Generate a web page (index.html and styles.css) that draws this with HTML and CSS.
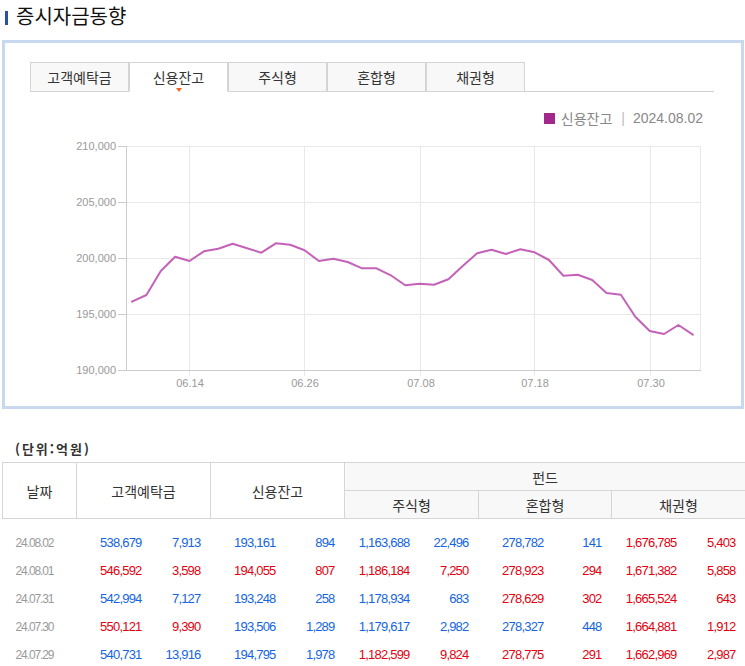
FILE: index.html
```html
<!DOCTYPE html>
<html lang="ko">
<head>
<meta charset="utf-8">
<title>증시자금동향</title>
<link rel="stylesheet" href="styles.css">
</head>
<body>
<h1 class="title"><span class="title-bar"></span>증시자금동향</h1>

<section class="panel">
  <ul class="tabs">
    <li class="tab">고객예탁금</li>
    <li class="tab active">신용잔고</li>
    <li class="tab">주식형</li>
    <li class="tab">혼합형</li>
    <li class="tab">채권형</li>
  </ul>
  <div class="legend">
    <span class="swatch"></span>
    <span class="legend-name">신용잔고</span>
    <span class="legend-sep">|</span>
    <span class="legend-date">2024.08.02</span>
  </div>
  <svg class="chart" width="736" height="278" viewBox="5 128 736 278" xmlns="http://www.w3.org/2000/svg">
    <g class="grid">
      <line x1="126" y1="146.5" x2="700" y2="146.5"/>
      <line x1="126" y1="202.5" x2="700" y2="202.5"/>
      <line x1="126" y1="258.5" x2="700" y2="258.5"/>
      <line x1="126" y1="314.5" x2="700" y2="314.5"/>
      <line x1="189.5" y1="146" x2="189.5" y2="376"/>
      <line x1="304.5" y1="146" x2="304.5" y2="376"/>
      <line x1="420.5" y1="146" x2="420.5" y2="376"/>
      <line x1="534.5" y1="146" x2="534.5" y2="376"/>
      <line x1="650.5" y1="146" x2="650.5" y2="376"/>
      <line x1="700.5" y1="146" x2="700.5" y2="370"/>
    </g>
    <g class="axis">
      <line x1="126.5" y1="146" x2="126.5" y2="371"/>
      <line x1="126" y1="370.5" x2="701" y2="370.5"/>
      <line x1="118" y1="146.5" x2="126" y2="146.5"/>
      <line x1="118" y1="202.5" x2="126" y2="202.5"/>
      <line x1="118" y1="258.5" x2="126" y2="258.5"/>
      <line x1="118" y1="314.5" x2="126" y2="314.5"/>
      <line x1="118" y1="370.5" x2="126" y2="370.5"/>
    </g>
    <g class="ylabels">
      <text x="116" y="150">210,000</text>
      <text x="116" y="206">205,000</text>
      <text x="116" y="262">200,000</text>
      <text x="116" y="318">195,000</text>
      <text x="116" y="374">190,000</text>
    </g>
    <g class="xlabels">
      <text x="190" y="387">06.14</text>
      <text x="305" y="387">06.26</text>
      <text x="421" y="387">07.08</text>
      <text x="535" y="387">07.18</text>
      <text x="651" y="387">07.30</text>
    </g>
    <polyline class="series" points="132,301.7 146.4,295 160.8,271 175.1,256.7 189.5,261 203.9,251.3 218.3,248.7 232.7,243.7 247,248.3 261.4,252.7 275.8,243.3 290.2,244.7 304.6,250.3 318.9,261 333.3,258.7 347.7,262 362.1,268.3 376.5,268.3 390.8,275.3 405.2,285.3 419.6,283.7 434,284.7 448.4,279.3 462.7,266 477.1,253.3 491.5,249.7 505.9,254 520.3,249.3 534.6,252.3 549,260 563.4,275.7 577.8,274.7 592.2,280 606.5,293 620.9,294.7 635.3,316.7 649.7,331 664.1,334 678.4,325 692.8,334.6"/>
  </svg>
</section>

<p class="unit">(단위:억원)</p>

<table class="data">
  <colgroup>
    <col class="c-date">
    <col class="c-a"><col class="c-a">
    <col class="c-a"><col class="c-a">
    <col class="c-a"><col class="c-a">
    <col class="c-a"><col class="c-b">
    <col class="c-a"><col class="c-a">
  </colgroup>
  <thead>
    <tr>
      <th rowspan="2">날짜</th>
      <th colspan="2" rowspan="2">고객예탁금</th>
      <th colspan="2" rowspan="2">신용잔고</th>
      <th colspan="6" class="fund">펀드</th>
    </tr>
    <tr>
      <th colspan="2" class="fund">주식형</th>
      <th colspan="2" class="fund">혼합형</th>
      <th colspan="2" class="fund">채권형</th>
    </tr>
  </thead>
  <tbody>
    <tr>
      <td class="date">24.08.02</td>
      <td class="dn">538,679</td><td class="dn ch">7,913</td>
      <td class="dn">193,161</td><td class="dn ch">894</td>
      <td class="dn">1,163,688</td><td class="dn ch">22,496</td>
      <td class="dn">278,782</td><td class="dn ch">141</td>
      <td class="up">1,676,785</td><td class="up ch">5,403</td>
    </tr>
    <tr>
      <td class="date">24.08.01</td>
      <td class="up">546,592</td><td class="up ch">3,598</td>
      <td class="up">194,055</td><td class="up ch">807</td>
      <td class="up">1,186,184</td><td class="up ch">7,250</td>
      <td class="up">278,923</td><td class="up ch">294</td>
      <td class="up">1,671,382</td><td class="up ch">5,858</td>
    </tr>
    <tr>
      <td class="date">24.07.31</td>
      <td class="dn">542,994</td><td class="dn ch">7,127</td>
      <td class="dn">193,248</td><td class="dn ch">258</td>
      <td class="dn">1,178,934</td><td class="dn ch">683</td>
      <td class="up">278,629</td><td class="up ch">302</td>
      <td class="up">1,665,524</td><td class="up ch">643</td>
    </tr>
    <tr>
      <td class="date">24.07.30</td>
      <td class="up">550,121</td><td class="up ch">9,390</td>
      <td class="dn">193,506</td><td class="dn ch">1,289</td>
      <td class="dn">1,179,617</td><td class="dn ch">2,982</td>
      <td class="dn">278,327</td><td class="dn ch">448</td>
      <td class="up">1,664,881</td><td class="up ch">1,912</td>
    </tr>
    <tr>
      <td class="date">24.07.29</td>
      <td class="dn">540,731</td><td class="dn ch">13,916</td>
      <td class="dn">194,795</td><td class="dn ch">1,978</td>
      <td class="up">1,182,599</td><td class="up ch">9,824</td>
      <td class="up">278,775</td><td class="up ch">291</td>
      <td class="up">1,662,969</td><td class="up ch">2,987</td>
    </tr>
  </tbody>
</table>
</body>
</html>
```

FILE: styles.css
```css
* {
  box-sizing: border-box;
}

html, body {
  margin: 0;
  padding: 0;
  background: #fff;
}

body {
  font-family: "Liberation Sans", "Noto Sans CJK KR", sans-serif;
  color: #333;
  width: 745px;
  overflow: hidden;
}

.title {
  display: flex;
  align-items: flex-start;
  margin: 0;
  padding: 4px 0 0 5px;
  height: 28px;
  font-family: "Noto Sans CJK KR", sans-serif;
  font-size: 20px;
  line-height: 24px;
  font-weight: normal;
  color: #111;
}

.title-bar {
  display: block;
  width: 3px;
  height: 14px;
  margin: 7px 8px 0 0;
  background: #2d4f9e;
}

.panel {
  margin: 12px 0 0 2px;
  width: 742px;
  height: 369px;
  border: 3px solid #c8d8ee;
  background: #fff;
}

.tabs {
  display: flex;
  list-style: none;
  margin: 19px 27px 0 25px;
  padding: 0;
  height: 30px;
  border-bottom: 1px solid #cfcfcf;
}

.tab {
  position: relative;
  width: 99px;
  height: 30px;
  margin-bottom: -1px;
  border: 1px solid #d4d4d4;
  background: #f8f8f8;
  text-align: center;
  font-family: "Noto Sans CJK KR", sans-serif;
  font-size: 14px;
  line-height: 28px;
  color: #333;
}

.tab.active {
  background: #fff;
  border-bottom-color: #fff;
}

.tab.active::after {
  content: "";
  position: absolute;
  left: 46px;
  top: 25px;
  width: 0;
  height: 0;
  border-style: solid;
  border-width: 4px 3.5px 0 3.5px;
  border-color: #f26522 transparent transparent transparent;
}

.legend {
  display: flex;
  justify-content: flex-end;
  align-items: center;
  height: 20px;
  margin: 16px 38px 0 0;
  font-size: 14px;
  color: #888;
}

.swatch {
  width: 11px;
  height: 11px;
  margin-right: 6px;
  background: #a2288c;
}

.legend-name {
  font-family: "Noto Sans CJK KR", sans-serif;
  line-height: 20px;
}

.legend-sep {
  margin: 0 8px 0 9px;
  color: #bbb;
}

.legend-date {
  line-height: 20px;
}

.chart {
  display: block;
}

.grid line {
  stroke: #e8e8e8;
  stroke-width: 1;
}

.axis line {
  stroke: #cccccc;
  stroke-width: 1;
}

.ylabels text {
  font-family: "Liberation Sans", sans-serif;
  font-size: 11px;
  fill: #999;
  text-anchor: end;
}

.xlabels text {
  font-family: "Liberation Sans", sans-serif;
  font-size: 11px;
  fill: #999;
  text-anchor: middle;
}

.series {
  fill: none;
  stroke: #c462b8;
  stroke-width: 2;
  stroke-linejoin: round;
  stroke-linecap: round;
}

.unit {
  margin: 30px 0 0 0;
  padding-left: 15px;
  height: 20px;
  font-family: "Noto Sans CJK KR", sans-serif;
  font-size: 13px;
  line-height: 20px;
  font-weight: bold;
  letter-spacing: 2px;
  color: #333;
}

.data {
  margin: 3px 0 0 2px;
  width: 743px;
  table-layout: fixed;
  border-collapse: collapse;
}

.c-date { width: 74px; }
.c-a { width: 67px; }
.c-b { width: 66px; }

.data th {
  height: 28px;
  padding: 0;
  border: 1px solid #d6d6d6;
  background: #fff;
  font-family: "Noto Sans CJK KR", sans-serif;
  font-size: 14px;
  font-weight: normal;
  line-height: 26px;
  color: #333;
  text-align: center;
}

.data th.fund {
  background: #f8f8f8;
}

.data td {
  height: 28px;
  padding: 0 2px 0 0;
  font-size: 13px;
  line-height: 28px;
  letter-spacing: -0.8px;
  text-align: right;
  white-space: nowrap;
}

.data tbody tr:first-child td {
  height: 38px;
  padding-top: 10px;
}

.data td.ch {
  padding-right: 10px;
}

.data td.date {
  padding: 0 0 0 13px;
  text-align: left;
  font-size: 12px;
  letter-spacing: -1.1px;
  color: #999;
}

.data tbody tr:first-child td.date {
  padding-top: 10px;
}

.up { color: #e3000f; }
.dn { color: #1464e4; }
```
